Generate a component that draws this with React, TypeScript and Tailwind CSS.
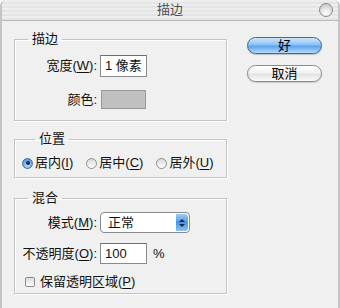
import React from "react";

const FONT = "font-['Liberation_Sans','Noto_Sans_CJK_SC',sans-serif]";

function Key({ k }: { k: string }) {
  return (
    <>
      (<span className="underline underline-offset-2">{k}</span>)
    </>
  );
}

function Radio({ checked }: { checked?: boolean }) {
  if (checked) {
    return (
      <span className="flex h-[11px] w-[11px] shrink-0 items-center justify-center rounded-full border border-[#3d6fa8] bg-[radial-gradient(circle_at_50%_70%,#bfe0ff_0%,#6aa9ea_55%,#3f7fcf_100%)]">
        <span className="h-[4px] w-[4px] rounded-full bg-[#1b2a3f]" />
      </span>
    );
  }
  return (
    <span className="h-[11px] w-[11px] shrink-0 rounded-full border border-[#8f8f8f] bg-[linear-gradient(180deg,#d8d8d8,#ffffff)]" />
  );
}

function Group({ title, className, children }: { title: string; className?: string; children: React.ReactNode }) {
  return (
    <fieldset className={`border border-[#c3c3c3] shadow-[inset_1px_1px_0_#fff,1px_1px_0_#fff] ${className ?? ""}`}>
      <legend className="ml-[13px] px-[4px] text-[13px] leading-[16px] text-[#111]">{title}</legend>
      {children}
    </fieldset>
  );
}

export default function App() {
  return (
    <div className={`${FONT} flex h-[308px] w-[340px] flex-col overflow-hidden rounded-t-[6px] border-x-2 border-[#c4c4c4] bg-[#f0f0f0] text-[13px] text-[#111]`}>
      {/* title bar */}
      <div className="relative flex h-[21px] shrink-0 items-center justify-center border-b border-[#b9b9b9] bg-[repeating-linear-gradient(180deg,#eeeeee_0px,#eeeeee_2px,#e4e4e4_2px,#e4e4e4_4px)]">
        <span className="text-[13px] leading-[16px] text-[#505050]">描边</span>
        <span className="absolute right-[5px] top-[3px] h-[14px] w-[14px] rounded-full border border-[#8a8a8a] bg-[radial-gradient(circle_at_50%_75%,#ffffff_0%,#e2e2e2_50%,#b8b8b8_100%)]" />
      </div>

      <div className="flex pt-[10px]">
        {/* left column */}
        <div className="ml-[12px] flex w-[213px] flex-col">
          <Group title="描边" className="pb-[11px] pt-[8px]">
            <div className="grid grid-cols-[82px_auto] items-center gap-x-[3px] gap-y-[13px]">
              <span className="text-right leading-[16px]">
                宽度<Key k="W" />:
              </span>
              <div className="flex h-[22px] w-[47px] items-center border border-[#8a8a8a] border-t-[#6f6f6f] bg-white pl-[4px]">
                1 像素
              </div>
              <span className="text-right leading-[16px]">颜色:</span>
              <div className="ml-[1px] h-[19px] w-[45px] border border-[#999] bg-[#c0c0c0]" />
            </div>
          </Group>

          <Group title="位置" className="mt-[10px] pb-[7px] pl-[7px] pt-[9px]">
            <div className="flex h-[14px] items-center gap-[13px]">
              <label className="flex items-center gap-[2px]">
                <Radio checked />
                <span className="leading-[14px]">
                  居内<Key k="I" />
                </span>
              </label>
              <label className="flex items-center gap-[2px]">
                <Radio />
                <span className="leading-[14px]">
                  居中<Key k="C" />
                </span>
              </label>
              <label className="flex items-center gap-[2px]">
                <Radio />
                <span className="leading-[14px]">
                  居外<Key k="U" />
                </span>
              </label>
            </div>
          </Group>

          <Group title="混合" className="mt-[12px] pb-[3px] pt-[6px]">
            <div className="grid grid-cols-[82px_auto] items-center gap-x-[3px] gap-y-[10px]">
              <span className="text-right leading-[16px]">
                模式<Key k="M" />:
              </span>
              <div className="flex h-[21px] w-[90px] items-center justify-between rounded-[4px] border border-[#8a8a8a] bg-white pl-[7px] pr-[1px]">
                <span className="leading-[16px]">正常</span>
                <span className="flex h-[17px] w-[12px] flex-col items-center justify-center gap-[2px] rounded-r-[3px] bg-[linear-gradient(180deg,#9fcdf8,#4d95e4_50%,#8ac3f5)]">
                  <span className="h-0 w-0 border-x-[3px] border-b-[3px] border-x-transparent border-b-[#1b2a3f]" />
                  <span className="h-0 w-0 border-x-[3px] border-t-[3px] border-x-transparent border-t-[#1b2a3f]" />
                </span>
              </div>
              <span className="-ml-[10px] whitespace-nowrap text-right leading-[16px]">
                不透明度<Key k="O" />:
              </span>
              <div className="flex items-center">
                <div className="flex h-[21px] w-[47px] items-center border border-[#8a8a8a] border-t-[#6f6f6f] bg-white pl-[4px]">
                  100
                </div>
                <span className="ml-[6px]">%</span>
              </div>
            </div>
            <label className="mt-[10px] flex h-[16px] items-center gap-[5px] pl-[10px]">
              <span className="h-[10px] w-[10px] rounded-[2px] border border-[#8a8a8a] bg-[linear-gradient(180deg,#dcdcdc,#ffffff)]" />
              <span className="leading-[16px]">
                保留透明区域<Key k="P" />
              </span>
            </label>
          </Group>
        </div>

        {/* buttons */}
        <div className="ml-[20px] mt-[6px] flex flex-col gap-[11px]">
          <button className="h-[17px] w-[75px] rounded-full border border-[#3a6aa3] bg-[linear-gradient(180deg,#cfe6fd_0%,#8cc2f5_45%,#5ea4ea_55%,#b3dbfd_100%)] text-[13px] leading-[15px] text-black shadow-[0_1px_1px_rgba(0,0,0,0.2)]">
            好
          </button>
          <button className="h-[17px] w-[75px] rounded-full border border-[#8a8a8a] bg-[linear-gradient(180deg,#ffffff_0%,#f2f2f2_45%,#e2e2e2_55%,#fbfbfb_100%)] text-[13px] leading-[15px] text-black shadow-[0_1px_1px_rgba(0,0,0,0.15)]">
            取消
          </button>
        </div>
      </div>
    </div>
  );
}
